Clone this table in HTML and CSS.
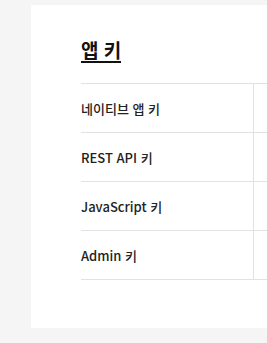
FILE: index.html
```html
<!DOCTYPE html>
<html lang="ko">
<head>
<meta charset="utf-8">
<link rel="stylesheet" href="styles.css">
</head>
<body>
<div class="page">
  <section class="card">
    <h2 class="title">앱 키</h2>
    <table class="keys">
      <tr><th>네이티브 앱 키</th><td></td></tr>
      <tr><th>REST API 키</th><td></td></tr>
      <tr><th>JavaScript 키</th><td></td></tr>
      <tr><th>Admin 키</th><td></td></tr>
    </table>
  </section>
</div>
</body>
</html>
```
FILE: styles.css
```css
html, body {
  margin: 0;
  padding: 0;
  background: #f4f5f4;
}
.page {
  padding: 5px 0 0 31px;
  overflow: hidden;
  height: 343px;
  box-sizing: border-box;
}
.card {
  background: #fff;
  height: 323px;
  padding: 33px 0 0 50px;
  box-sizing: border-box;
  font-family: "Noto Sans CJK KR", "Noto Sans", sans-serif;
  color: #222;
}
.title {
  display: inline-block;
  margin: 0;
  font-size: 19px;
  font-weight: 700;
  line-height: 23px;
  border-bottom: 2px solid #111;
  color: #111;
}
.keys {
  margin-top: 20px;
  border-collapse: collapse;
  width: 300px;
}
.keys tr {
  border-top: 1px solid #e2e2e2;
  border-bottom: 1px solid #e2e2e2;
}
.keys th {
  width: 172px;
  height: 48px;
  padding: 0;
  text-align: left;
  font-size: 13px;
  font-weight: 500;
  letter-spacing: 0;
  border-right: 1px solid #e2e2e2;
}
.keys td {
  padding: 0;
}
```
